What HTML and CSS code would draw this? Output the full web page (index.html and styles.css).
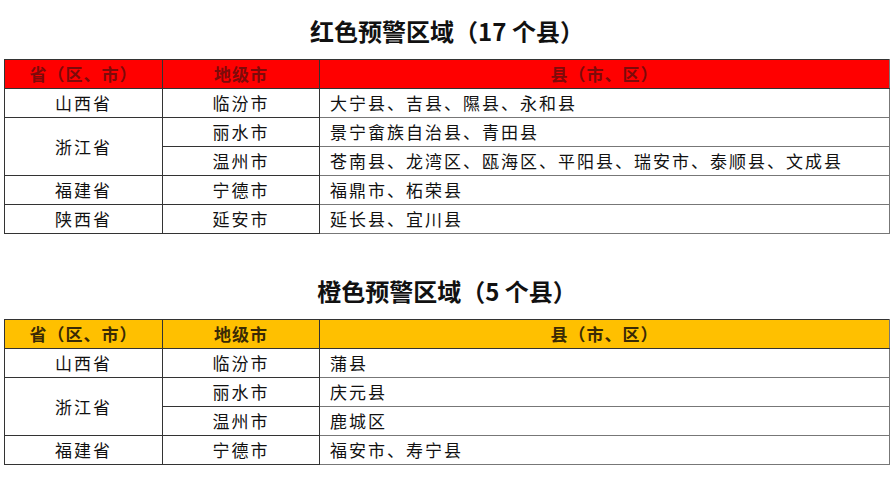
FILE: index.html
```html
<!DOCTYPE html>
<html lang="zh-CN">
<head>
<meta charset="utf-8">
<title>预警区域</title>
<link rel="stylesheet" href="styles.css">
</head>
<body>
<section class="block">
  <h2 class="title">红色预警区域（17 个县）</h2>
  <table class="warn red">
    <colgroup><col class="c1"><col class="c2"><col class="c3"></colgroup>
    <thead>
      <tr><th>省（区、市）</th><th>地级市</th><th>县（市、区）</th></tr>
    </thead>
    <tbody>
      <tr><td class="ctr">山西省</td><td class="ctr">临汾市</td><td class="list">大宁县、吉县、隰县、永和县</td></tr>
      <tr><td class="ctr" rowspan="2">浙江省</td><td class="ctr">丽水市</td><td class="list">景宁畲族自治县、青田县</td></tr>
      <tr><td class="ctr">温州市</td><td class="list">苍南县、龙湾区、瓯海区、平阳县、瑞安市、泰顺县、文成县</td></tr>
      <tr><td class="ctr">福建省</td><td class="ctr">宁德市</td><td class="list">福鼎市、柘荣县</td></tr>
      <tr><td class="ctr">陕西省</td><td class="ctr">延安市</td><td class="list">延长县、宜川县</td></tr>
    </tbody>
  </table>
</section>
<section class="block second">
  <h2 class="title">橙色预警区域（5 个县）</h2>
  <table class="warn orange">
    <colgroup><col class="c1"><col class="c2"><col class="c3"></colgroup>
    <thead>
      <tr><th>省（区、市）</th><th>地级市</th><th>县（市、区）</th></tr>
    </thead>
    <tbody>
      <tr><td class="ctr">山西省</td><td class="ctr">临汾市</td><td class="list">蒲县</td></tr>
      <tr><td class="ctr" rowspan="2">浙江省</td><td class="ctr">丽水市</td><td class="list">庆元县</td></tr>
      <tr><td class="ctr">温州市</td><td class="list">鹿城区</td></tr>
      <tr><td class="ctr">福建省</td><td class="ctr">宁德市</td><td class="list">福安市、寿宁县</td></tr>
    </tbody>
  </table>
</section>
</body>
</html>
```

FILE: styles.css
```css
html, body {
  margin: 0;
  padding: 0;
  background: #fff;
}
body {
  padding: 16px 4px 0 4px;
  font-family: "Noto Sans CJK SC", "Noto Sans", sans-serif;
  color: #111;
}
.block {
  display: flex;
  flex-direction: column;
}
.second {
  margin-top: 42px;
}
.title {
  margin: 0 0 13px 0;
  height: 30px;
  line-height: 30px;
  font-size: 24px;
  font-weight: 700;
  text-align: center;
  color: #111;
}
.warn {
  width: 886px;
  border-collapse: collapse;
  table-layout: fixed;
  border: 1px solid #333;
}
.c1 { width: 158px; }
.c2 { width: 157px; }
.warn th,
.warn td {
  height: 28px;
  padding: 0;
  border: 1px solid #333;
  font-size: 17px;
  line-height: 28px;
  white-space: nowrap;
}
.warn td:last-child,
.warn th:last-child {
  border-left-color: #999;
  border-right-color: #777;
}
.warn tbody tr td.list {
  border-top-color: #777;
  border-bottom-color: #777;
}
.warn th {
  font-weight: 700;
  letter-spacing: 1px;
  text-align: center;
}
.red th {
  background: #ff0000;
  color: #7d0a0a;
}
.orange th {
  background: #ffc000;
  color: #3a2a05;
}
.ctr {
  text-align: center;
  letter-spacing: 2px;
}
.list {
  text-align: left;
  padding-left: 10px !important;
  letter-spacing: 2px;
}
```
